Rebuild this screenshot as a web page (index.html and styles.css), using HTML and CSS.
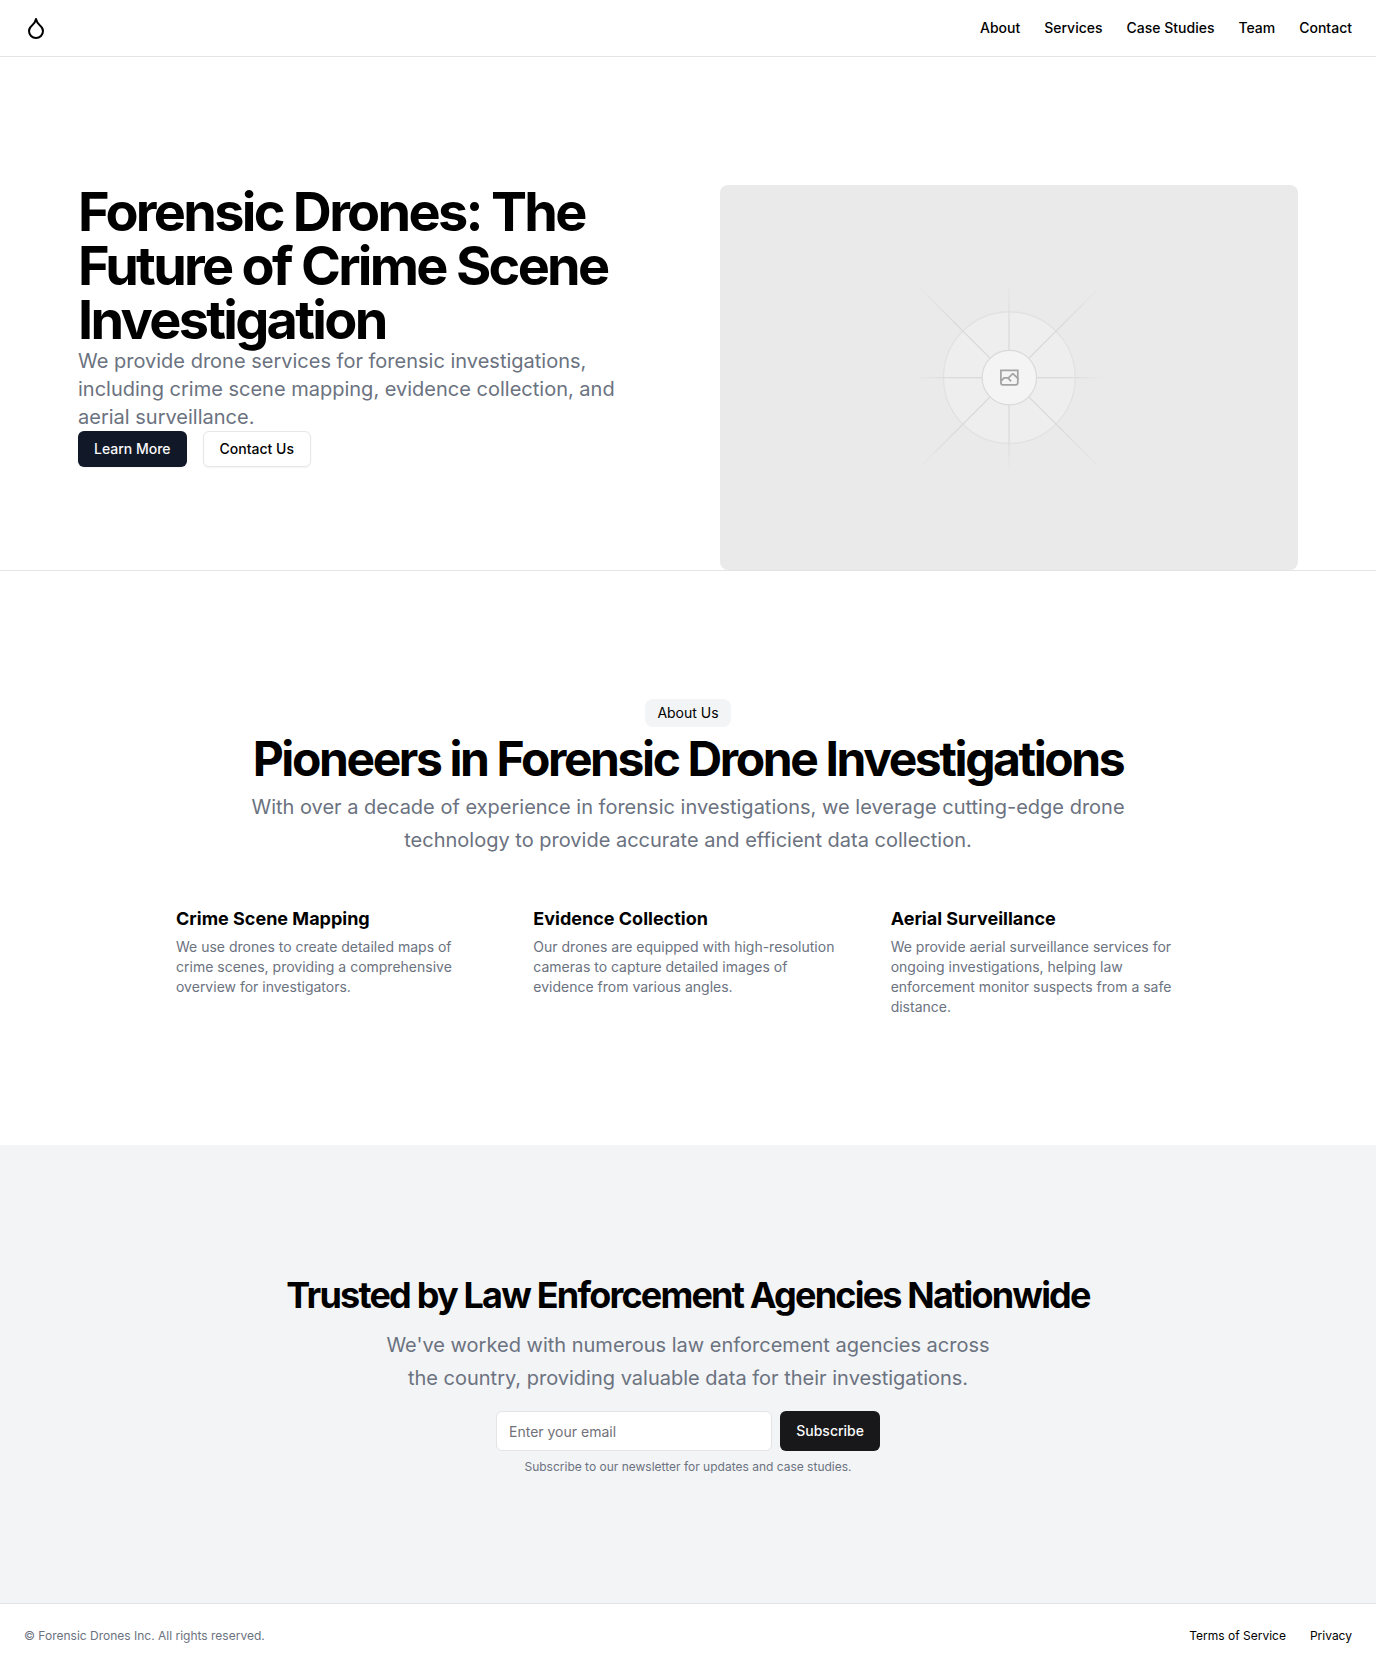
FILE: index.html
```html
<!DOCTYPE html>
<html lang="en">
<head>
  <meta charset="utf-8">
  <meta name="viewport" content="width=device-width, initial-scale=1">
  <title>Forensic Drones</title>
  <link rel="stylesheet" href="styles.css">
</head>
<body>
  <header class="site-header">
    <a class="logo" href="#" aria-label="Forensic Drones">
      <svg width="24" height="24" viewBox="0 0 24 24" fill="none" stroke="currentColor" stroke-width="2" stroke-linecap="round" stroke-linejoin="round" aria-hidden="true">
        <path d="M12 22a7 7 0 0 0 7-7c0-2-1-3.900-3-5.500s-3.500-4-4-6.500c-.5 2.500-2 4.900-4 6.500C6 11.100 5 13 5 15a7 7 0 0 0 7 7z"/>
      </svg>
    </a>
    <nav class="site-nav">
      <a href="#about">About</a>
      <a href="#services">Services</a>
      <a href="#cases">Case Studies</a>
      <a href="#team">Team</a>
      <a href="#contact">Contact</a>
    </nav>
  </header>

  <main>
    <section class="hero">
      <div class="hero-grid">
        <div class="hero-copy">
          <h1>Forensic Drones: The Future of Crime Scene Investigation</h1>
          <p class="lead">We provide drone services for forensic investigations, including crime scene mapping, evidence collection, and aerial surveillance.</p>
          <div class="actions">
            <button class="btn btn-navy" type="button">Learn More</button>
            <button class="btn btn-outline" type="button">Contact Us</button>
          </div>
        </div>
        <svg class="hero-image" viewBox="0 0 1200 1200" preserveAspectRatio="xMidYMid slice" fill="none" role="img" aria-label="Hero">
          <defs>
            <linearGradient id="fade-h" gradientUnits="userSpaceOnUse" x1="405" y1="0" x2="796" y2="0">
              <stop stop-color="#c9c9c9" stop-opacity="0"/>
              <stop offset=".208" stop-color="#c9c9c9"/>
              <stop offset=".792" stop-color="#c9c9c9"/>
              <stop offset="1" stop-color="#c9c9c9" stop-opacity="0"/>
            </linearGradient>
            <linearGradient id="fade-v" gradientUnits="userSpaceOnUse" x1="0" y1="404" x2="0" y2="796">
              <stop stop-color="#c9c9c9" stop-opacity="0"/>
              <stop offset=".208" stop-color="#c9c9c9"/>
              <stop offset=".792" stop-color="#c9c9c9"/>
              <stop offset="1" stop-color="#c9c9c9" stop-opacity="0"/>
            </linearGradient>
            <linearGradient id="fade-d" gradientUnits="userSpaceOnUse" x1="412" y1="411" x2="790" y2="789">
              <stop stop-color="#c9c9c9" stop-opacity="0"/>
              <stop offset=".208" stop-color="#c9c9c9"/>
              <stop offset=".792" stop-color="#c9c9c9"/>
              <stop offset="1" stop-color="#c9c9c9" stop-opacity="0"/>
            </linearGradient>
            <linearGradient id="fade-u" gradientUnits="userSpaceOnUse" x1="412" y1="789" x2="790" y2="411">
              <stop stop-color="#c9c9c9" stop-opacity="0"/>
              <stop offset=".208" stop-color="#c9c9c9"/>
              <stop offset=".792" stop-color="#c9c9c9"/>
              <stop offset="1" stop-color="#c9c9c9" stop-opacity="0"/>
            </linearGradient>
          </defs>
          <rect width="1200" height="1200" fill="#eaeaea"/>
          <g opacity=".5" stroke-width="2.418">
            <circle cx="600.7" cy="599.9" r="136.6" fill="#fafafa" stroke="#c9c9c9" opacity=".5"/>
            <path stroke="url(#fade-h)" d="M405 599.900H796"/>
            <path stroke="url(#fade-v)" d="M600 404V796"/>
            <path stroke="url(#fade-d)" d="M412 411 790 789"/>
            <path stroke="url(#fade-u)" d="M412 789 790 411"/>
            <circle cx="600.7" cy="599.9" r="56.5" fill="#fff" stroke="#c9c9c9"/>
          </g>
          <path fill="#a3a3a3" fill-rule="evenodd" clip-rule="evenodd" d="M616.426 586.580h-31.434v16.176l3.553-3.554.531-.531h9.068l.074-.074 8.463-8.463h2.565l7.180 7.181V586.580Zm-15.715 14.654 3.698 3.699 1.283 1.282-2.565 2.565-1.282-1.283-5.200-5.199h-6.066l-5.514 5.514-.073.073v2.876a2.418 2.418 0 0 0 2.418 2.418h26.598a2.418 2.418 0 0 0 2.418-2.418v-8.317l-8.463-8.463-7.181 7.181-.071.072Zm-19.347 5.442v4.085a6.045 6.045 0 0 0 6.046 6.045h26.598a6.044 6.044 0 0 0 6.045-6.045v-7.108l1.356-1.355-1.282-1.283-.074-.073v-17.989h-38.689v23.430l-.146.146.146.147Z"/>
        </svg>
      </div>
    </section>

    <section class="about" id="about">
      <div class="about-intro">
        <div class="badge">About Us</div>
        <h2>Pioneers in Forensic Drone Investigations</h2>
        <p class="lead lead-relaxed">With over a decade of experience in forensic investigations, we leverage cutting-edge drone technology to provide accurate and efficient data collection.</p>
      </div>
      <div class="features" id="services">
        <article class="feature">
          <h3>Crime Scene Mapping</h3>
          <p>We use drones to create detailed maps of crime scenes, providing a comprehensive overview for investigators.</p>
        </article>
        <article class="feature">
          <h3>Evidence Collection</h3>
          <p>Our drones are equipped with high-resolution cameras to capture detailed images of evidence from various angles.</p>
        </article>
        <article class="feature">
          <h3>Aerial Surveillance</h3>
          <p>We provide aerial surveillance services for ongoing investigations, helping law enforcement monitor suspects from a safe distance.</p>
        </article>
      </div>
    </section>

    <section class="trusted" id="contact">
      <div class="trusted-intro">
        <h2>Trusted by Law Enforcement Agencies Nationwide</h2>
        <p class="lead lead-relaxed">We've worked with numerous law enforcement agencies across the country, providing valuable data for their investigations.</p>
      </div>
      <div class="signup">
        <form class="signup-form">
          <input type="email" placeholder="Enter your email" aria-label="Email">
          <button class="btn btn-dark" type="submit">Subscribe</button>
        </form>
        <p class="small">Subscribe to our newsletter for updates and case studies.</p>
      </div>
    </section>
  </main>

  <footer class="site-footer">
    <p class="small">© Forensic Drones Inc. All rights reserved.</p>
    <nav class="footer-nav">
      <a href="#terms">Terms of Service</a>
      <a href="#privacy">Privacy</a>
    </nav>
  </footer>
</body>
</html>
```

FILE: styles.css
```css
:root {
  --ink: #000;
  --muted: #6b7280;
  --line: #e4e4e7;
  --surface: #f3f4f6;
}

*,
*::before,
*::after {
  box-sizing: border-box;
}

body,
h1,
h2,
h3,
p {
  margin: 0;
}

body {
  background: #fff;
  color: var(--ink);
  font-family: Inter, "Liberation Sans", sans-serif;
  font-size: 16px;
  line-height: 24px;
}

a {
  color: inherit;
  text-decoration: none;
}

svg {
  display: block;
}

/* Header */

.site-header {
  display: flex;
  align-items: center;
  justify-content: space-between;
  padding: 16px 24px;
  border-bottom: 1px solid var(--line);
}

.site-nav {
  display: flex;
  gap: 24px;
  font-size: 14px;
  font-weight: 500;
  line-height: 20px;
}

/* Shared text and buttons */

h1,
h2 {
  font-weight: 700;
  letter-spacing: -0.05em;
}

.lead {
  color: var(--muted);
  font-size: 20px;
  line-height: 28px;
}

.lead-relaxed {
  line-height: 33px;
}

.small {
  color: var(--muted);
  font-size: 12px;
  line-height: 16px;
}

.btn {
  height: 36px;
  padding: 0 16px;
  border: 0;
  border-radius: 6px;
  font: 500 14px/20px Inter, "Liberation Sans", sans-serif;
  white-space: nowrap;
}

.btn-navy {
  background: #111827;
  color: #f9fafb;
  box-shadow: 0 1px 2px rgb(0 0 0 / 5%);
}

.btn-outline {
  border: 1px solid #e5e7eb;
  background: #fff;
  color: var(--ink);
  box-shadow: 0 1px 2px rgb(0 0 0 / 5%);
}

.btn-dark {
  height: 40px;
  background: #18181b;
  color: #fafafa;
}

/* Hero */

.hero {
  padding-top: 128px;
  border-bottom: 1px solid var(--line);
}

.hero-grid {
  display: grid;
  grid-template-columns: 1fr 1fr;
  gap: 64px;
  max-width: 1300px;
  margin: 0 auto;
  padding: 0 40px;
}

.hero h1 {
  font-size: 54px;
  line-height: 54px;
}

.hero-image {
  width: 100%;
  aspect-ratio: 3 / 2;
  border-radius: 8px;
}

.actions {
  display: flex;
  gap: 16px;
}

/* About */

.about {
  padding: 128px 24px;
}

.about-intro {
  display: flex;
  flex-direction: column;
  align-items: center;
  gap: 8px;
  max-width: 900px;
  margin: 0 auto;
  text-align: center;
}

.badge {
  padding: 4px 12px;
  border-radius: 8px;
  background: var(--surface);
  font-size: 14px;
  line-height: 20px;
}

.about h2 {
  font-size: 48px;
  line-height: 48px;
}

.features {
  display: grid;
  grid-template-columns: repeat(3, 1fr);
  gap: 48px;
  max-width: 1024px;
  margin: 48px auto 0;
}

.feature {
  display: flex;
  flex-direction: column;
  gap: 4px;
}

.feature h3 {
  font-size: 18px;
  line-height: 28px;
}

.feature p {
  color: var(--muted);
  font-size: 14px;
  line-height: 20px;
}

/* Newsletter */

.trusted {
  display: flex;
  flex-direction: column;
  align-items: center;
  gap: 16px;
  padding: 128px 24px;
  background: var(--surface);
  text-align: center;
}

.trusted-intro {
  display: flex;
  flex-direction: column;
  align-items: center;
  gap: 12px;
}

.trusted h2 {
  font-size: 36px;
  line-height: 44px;
}

.trusted .lead {
  max-width: 620px;
}

.signup {
  display: flex;
  flex-direction: column;
  gap: 8px;
  width: 100%;
  max-width: 384px;
}

.signup-form {
  display: flex;
  gap: 8px;
}

.signup-form input {
  flex: 1;
  min-width: 0;
  height: 40px;
  padding: 8px 12px;
  border: 1px solid var(--line);
  border-radius: 6px;
  background: #fff;
  color: var(--ink);
  font: 400 14px/20px Inter, "Liberation Sans", sans-serif;
}

.signup-form input::placeholder {
  color: #71717a;
  opacity: 1;
}

/* Footer */

.site-footer {
  display: flex;
  align-items: center;
  justify-content: space-between;
  padding: 24px;
  border-top: 1px solid var(--line);
}

.footer-nav {
  display: flex;
  gap: 24px;
  font-size: 12px;
  line-height: 16px;
}
```
